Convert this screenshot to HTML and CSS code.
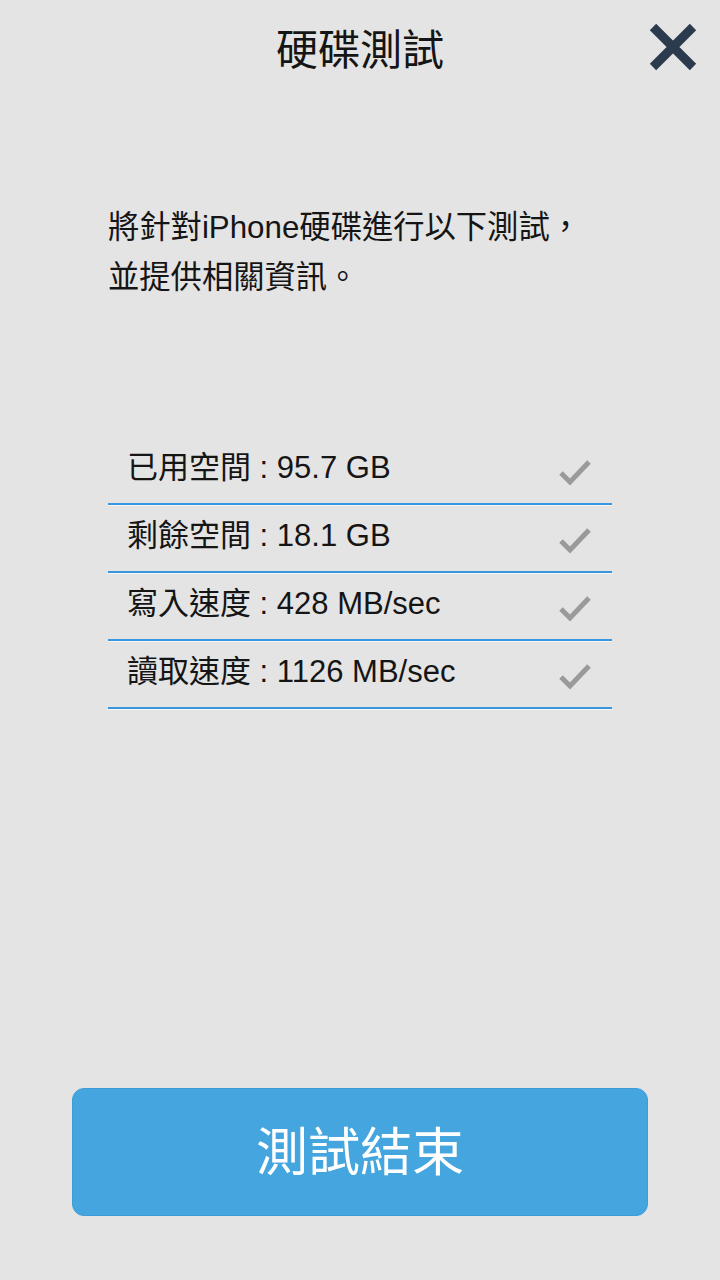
FILE: index.html
```html
<!DOCTYPE html>
<html lang="zh-Hant">
<head>
<meta charset="utf-8">
<title>硬碟測試</title>
<link rel="stylesheet" href="styles.css">
</head>
<body>
<div class="screen">
  <header class="header">
    <div class="spacer"></div>
    <h1 class="title">硬碟測試</h1>
    <button class="close" aria-label="關閉">
      <svg width="50" height="50" viewBox="0 0 50 50">
        <path d="M5 5 L45 45 M45 5 L5 45" stroke="#2b3a4c" stroke-width="9" stroke-linecap="butt"/>
      </svg>
    </button>
  </header>

  <p class="intro">將針對iPhone硬碟進行以下測試，<br>並提供相關資訊。</p>

  <ul class="list">
    <li class="row"><span class="label">已用空間 : 95.7 GB</span><svg class="check" width="34" height="28" viewBox="0 0 34 28"><path d="M3 15 L12 24 L31 4" fill="none" stroke="#9a9a9a" stroke-width="5"/></svg></li>
    <li class="row"><span class="label">剩餘空間 : 18.1 GB</span><svg class="check" width="34" height="28" viewBox="0 0 34 28"><path d="M3 15 L12 24 L31 4" fill="none" stroke="#9a9a9a" stroke-width="5"/></svg></li>
    <li class="row"><span class="label">寫入速度 : 428 MB/sec</span><svg class="check" width="34" height="28" viewBox="0 0 34 28"><path d="M3 15 L12 24 L31 4" fill="none" stroke="#9a9a9a" stroke-width="5"/></svg></li>
    <li class="row"><span class="label">讀取速度 : 1126 MB/sec</span><svg class="check" width="34" height="28" viewBox="0 0 34 28"><path d="M3 15 L12 24 L31 4" fill="none" stroke="#9a9a9a" stroke-width="5"/></svg></li>
  </ul>

  <button class="finish">測試結束</button>
</div>
</body>
</html>
```

FILE: styles.css
```css
html, body {
  margin: 0;
  padding: 0;
  background: #e4e4e4;
}

body {
  font-family: "Liberation Sans", "Noto Sans CJK TC", sans-serif;
  color: #111;
}

.screen {
  display: flex;
  flex-direction: column;
  min-height: 1280px;
  box-sizing: border-box;
  padding-bottom: 64px;
}

.header {
  display: grid;
  grid-template-columns: 80px 1fr 80px;
  align-items: center;
  height: 96px;
}

.title {
  margin: -3px 0 0 0;
  text-align: center;
  font-family: "Noto Sans CJK TC", sans-serif;
  font-weight: 400;
  font-size: 42px;
  line-height: 48px;
  color: #151515;
}

.close {
  justify-self: end;
  margin-right: 22px;
  margin-top: -2px;
  width: 50px;
  height: 50px;
  padding: 0;
  border: 0;
  background: none;
  display: flex;
}

.intro {
  margin: 107px 0 0 108px;
  font-size: 31.3px;
  line-height: 50px;
  color: #151515;
}

.list {
  list-style: none;
  margin: 134px 0 0 108px;
  padding: 0;
  width: 504px;
}

.row {
  display: flex;
  align-items: center;
  justify-content: space-between;
  height: 66px;
  padding: 0 20px 0 19px;
  border-bottom: 2px solid #3a96dc;
  box-shadow: 0 1px 0 #f6f6f6;
}

.label {
  font-size: 31px;
  line-height: 34px;
  margin-top: -5px;
  color: #151515;
}

.check {
  margin-top: 4px;
}

.finish {
  margin: auto 72px 0 72px;
  height: 128px;
  border: 1px solid #3d9cd8;
  border-radius: 12px;
  background: #45a5de;
  color: #fff;
  font-family: "Noto Sans CJK TC", sans-serif;
  font-size: 52px;
  font-weight: 400;
  padding: 0 0 8px 0;
}
```
